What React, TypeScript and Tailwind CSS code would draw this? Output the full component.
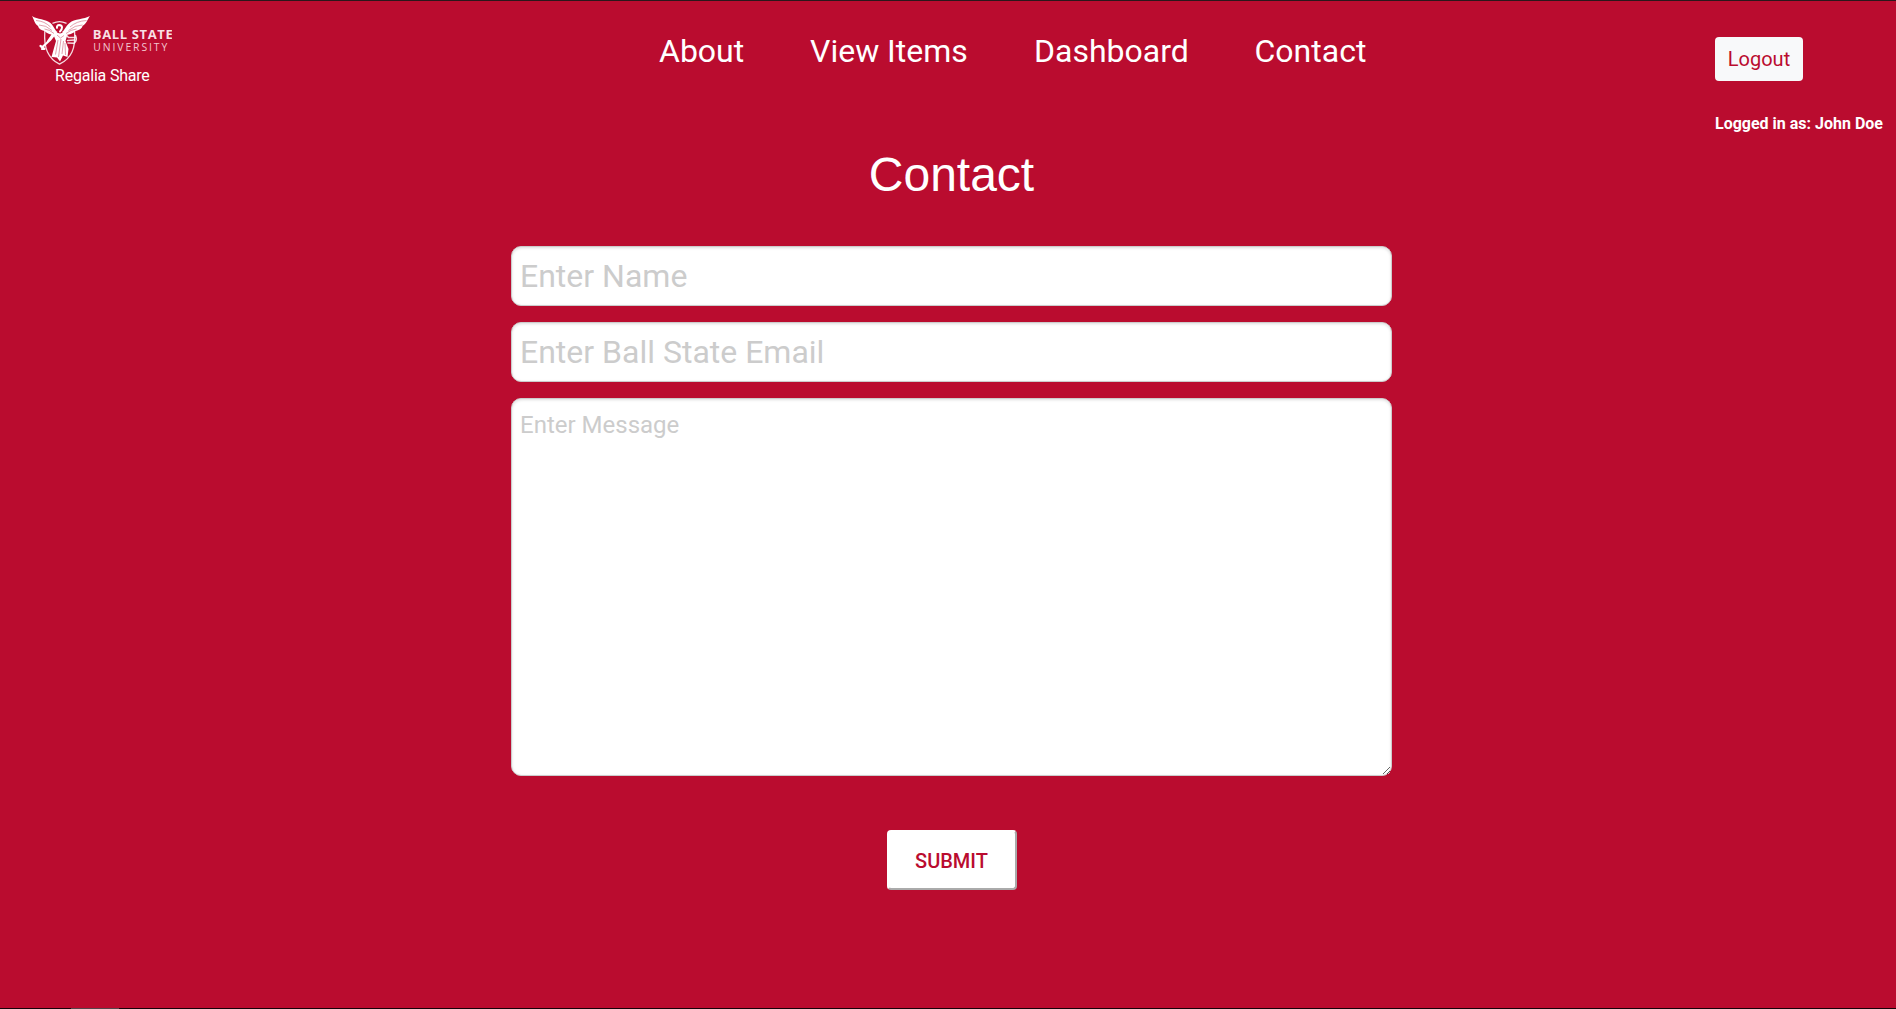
const links = [
  { label: "About", width: "w-[151px]" },
  { label: "View Items", width: "w-[224px]" },
  { label: "Dashboard", width: "w-[220.5px]" },
  { label: "Contact", width: "w-[114px]" },
];

function Logo() {
  return (
    <svg width="140" height="53" viewBox="32 14 140 53" className="block overflow-hidden">
      {/* shield */}
      <g fill="none" stroke="#fff" strokeLinecap="round" strokeLinejoin="round">
        <path d="M44.8 31C44.3 39 44.5 46 47.5 52C50 57.5 54 61.5 59.5 64.2C65 61.5 69.5 57.5 72 52C75 46 75 39 74.6 31M53 23.2Q59.5 20 66 23.2" strokeWidth="1.3" opacity=".85" />
        {/* arms, sword and wreath */}
        <path d="M55 33.5L50 40L43 46.5M52.5 35L48 41.5M40.5 46L44.5 48.8L42 49" strokeWidth="2.2" />
        <path d="M65 33.5L68.5 37.5L75 37.5M67.5 40.5L74.5 40M68 43L74 43.2M75.5 35.5Q77.5 40 74.5 43" strokeWidth="1.5" opacity=".85" />
        {/* head */}
        <path d="M57 27.8Q56.6 25.2 59.2 25Q62 25 62 27.6Q62 29.5 60 31.5" strokeWidth="2" />
      </g>
      {/* wings */}
      <path d="M32 16C37 19.5 46 19 50.5 23C54 26 54.5 30 57.5 32L55 35C51 34.8 47 34 44.5 31C41 30.5 38.5 28.5 38 26C34.5 23.5 34 19.5 32 16Z" fill="#fff" />
      <path d="M90 16C84 19.5 74.5 18.5 69.5 23C65.5 26 65 30 62 32L64.5 35C69 34.8 73 34 75.5 31C79 30.5 82 28.5 82.5 26C86.5 23.5 87.5 19.5 90 16Z" fill="#fff" />
      {/* gown */}
      <path d="M54.5 32L60 33.5L65.5 32L67 36L65.5 41L68.5 49L67.5 57L63 55.5L60 61.5L57 57.5L51.5 57L54 48L56 41L53.5 35Z" fill="#fff" />
      <g fill="none" stroke="#ba0c2f" strokeWidth=".6" opacity=".65">
        <path d="M36 20.5Q44.5 21 50.5 27M39 25Q46 25 52 30.5M44.5 29Q49.5 29.5 54 33.5M86.5 20.5Q76.5 21 70 27M82.5 25Q75 25 68.5 30.5M76.5 29Q71 29.5 66 33.5" />
        <path d="M58 40L55.5 54.5M61 39L58.5 57M63.5 41L62 54M65 43L65.5 55M57 35L60.5 38L64 35.5" />
      </g>
      <text x="92.8" y="39.2" fill="#f8dfe4" fontFamily="Open Sans, sans-serif" fontWeight="700" fontSize="13" textLength="80">BALL STATE</text>
      <text x="93.3" y="51.4" fill="#f3c6cf" fontFamily="Open Sans, sans-serif" fontWeight="500" fontSize="10.4" textLength="74">UNIVERSITY</text>
    </svg>
  );
}

const fieldClass =
  "block w-full rounded-[10px] border border-[#ccc] bg-white px-2 text-[#333] shadow-[inset_0_1px_3px_#ddd] outline-none placeholder:text-[#ccc] placeholder:opacity-100";

export default function App() {
  return (
    <div className="flex h-[1009px] w-full flex-col overflow-hidden border-t border-[#2b171b] bg-[#ba0c2f] font-[Roboto,sans-serif] text-white">
      <header className="flex h-[139px] shrink-0 items-start">
        <div className="w-[659px] pt-[13px] pl-8">
          <Logo />
          <p className="-mt-[3px] pl-[23px] text-base leading-6 tracking-[-0.2px]">Regalia Share</p>
        </div>
        <nav className="flex w-[1056px] pt-[26px] text-[32px] leading-12">
          {links.map(({ label, width }) => (
            <a key={label} href="#" className={`${width} whitespace-nowrap`}>
              {label}
            </a>
          ))}
        </nav>
        <div className="pt-9">
          <button className="block h-11 w-[88px] rounded bg-[#f8f9fa] text-xl text-[#ba0c2f]">Logout</button>
          <p className="mt-[31px] text-base leading-6 font-bold whitespace-nowrap">Logged in as: John Doe</p>
        </div>
      </header>
      <main className="ml-[511px] w-[881px]">
        <h1 className="pt-px text-center font-['Liberation_Sans',sans-serif] text-5xl leading-[68px]">Contact</h1>
        <form className="mt-[37px] flex flex-col items-center gap-4" onSubmit={(e) => e.preventDefault()}>
          <input className={`${fieldClass} h-15 text-[32px]`} placeholder="Enter Name" />
          <input className={`${fieldClass} h-15 text-[32px]`} placeholder="Enter Ball State Email" />
          <textarea className={`${fieldClass} h-[378px] resize py-2 text-2xl leading-9`} placeholder="Enter Message" />
          <button className="mt-[38px] h-15 w-[130px] rounded border-2 border-t-white border-r-[#aaa] border-b-[#aaa] border-l-white bg-white pt-px text-xl font-medium text-[#ba0c2f]">
            SUBMIT
          </button>
        </form>
      </main>
      <footer className="mt-auto flex h-px shrink-0 bg-[#160308] pl-[71px]">
        <span className="h-px w-12 bg-[#55454a]" />
      </footer>
    </div>
  );
}
